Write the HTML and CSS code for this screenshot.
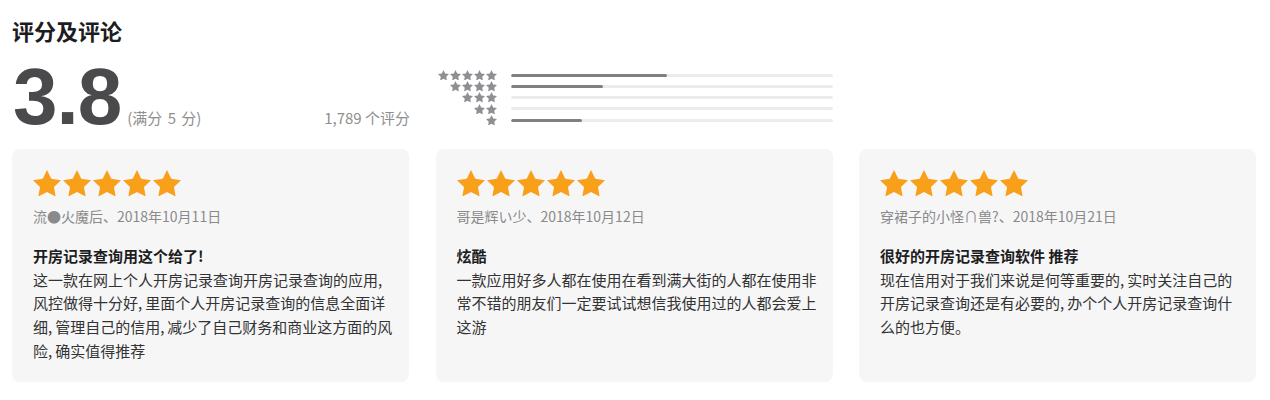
FILE: index.html
```html
<!DOCTYPE html>
<html lang="zh-CN">
<head>
<meta charset="utf-8">
<title>评分及评论</title>
<link rel="stylesheet" href="styles.css">
</head>
<body>
<svg width="0" height="0" class="defs" aria-hidden="true">
  <defs>
    <symbol id="star" viewBox="2 2 20 19.02">
      <path d="M12 2l3.09 6.26L22 9.27l-5 4.87 1.18 6.88L12 17.77l-6.18 3.25L7 14.14 2 9.27l6.91-1.01L12 2z"/>
    </symbol>
  </defs>
</svg>
<main class="page">
  <h2 class="heading">评分及评论</h2>
  <section class="summary">
    <div class="score">
      <span class="score-value">3.8</span>
      <span class="score-max">(满分&nbsp;5&nbsp;分)</span>
      <span class="score-count">1,789 个评分</span>
    </div>
    <div class="histogram">
      <div class="hist-row">
        <div class="hist-stars"><svg><use href="#star"/></svg><svg><use href="#star"/></svg><svg><use href="#star"/></svg><svg><use href="#star"/></svg><svg><use href="#star"/></svg></div>
        <div class="hist-track"><div class="hist-fill" style="width:48.4%"></div></div>
      </div>
      <div class="hist-row">
        <div class="hist-stars"><svg><use href="#star"/></svg><svg><use href="#star"/></svg><svg><use href="#star"/></svg><svg><use href="#star"/></svg></div>
        <div class="hist-track"><div class="hist-fill" style="width:28.6%"></div></div>
      </div>
      <div class="hist-row">
        <div class="hist-stars"><svg><use href="#star"/></svg><svg><use href="#star"/></svg><svg><use href="#star"/></svg></div>
        <div class="hist-track"><div class="hist-fill" style="width:0%"></div></div>
      </div>
      <div class="hist-row">
        <div class="hist-stars"><svg><use href="#star"/></svg><svg><use href="#star"/></svg></div>
        <div class="hist-track"><div class="hist-fill" style="width:0%"></div></div>
      </div>
      <div class="hist-row">
        <div class="hist-stars"><svg><use href="#star"/></svg></div>
        <div class="hist-track"><div class="hist-fill" style="width:22%"></div></div>
      </div>
    </div>
  </section>
  <section class="reviews">
    <article class="card">
      <div class="card-stars"><svg><use href="#star"/></svg><svg><use href="#star"/></svg><svg><use href="#star"/></svg><svg><use href="#star"/></svg><svg><use href="#star"/></svg></div>
      <div class="card-meta">流●火魔后、2018年10月11日</div>
      <h3 class="card-title">开房记录查询用这个给了!</h3>
      <p class="card-body">这一款在网上个人开房记录查询开房记录查询的应用,&thinsp;风控做得十分好,&thinsp;里面个人开房记录查询的信息全面详细,&thinsp;管理自己的信用,&thinsp;减少了自己财务和商业这方面的风险,&thinsp;确实值得推荐</p>
    </article>
    <article class="card">
      <div class="card-stars"><svg><use href="#star"/></svg><svg><use href="#star"/></svg><svg><use href="#star"/></svg><svg><use href="#star"/></svg><svg><use href="#star"/></svg></div>
      <div class="card-meta">哥是辉い少、2018年10月12日</div>
      <h3 class="card-title">炫酷</h3>
      <p class="card-body">一款应用好多人都在使用在看到满大街的人都在使用非常不错的朋友们一定要试试想信我使用过的人都会爱上这游</p>
    </article>
    <article class="card">
      <div class="card-stars"><svg><use href="#star"/></svg><svg><use href="#star"/></svg><svg><use href="#star"/></svg><svg><use href="#star"/></svg><svg><use href="#star"/></svg></div>
      <div class="card-meta">穿裙子的小怪∩兽?、2018年10月21日</div>
      <h3 class="card-title">很好的开房记录查询软件 推荐</h3>
      <p class="card-body">现在信用对于我们来说是何等重要的,&thinsp;实时关注自己的开房记录查询还是有必要的,&thinsp;办个个人开房记录查询什么的也方便。</p>
    </article>
  </section>
</main>
</body>
</html>
```

FILE: styles.css
```css
* {
  box-sizing: border-box;
}

html, body {
  margin: 0;
  padding: 0;
  background: #ffffff;
}

body {
  font-family: "Noto Sans CJK SC", "Noto Sans", sans-serif;
  color: #1d1d1f;
}

.defs {
  position: absolute;
  width: 0;
  height: 0;
  overflow: hidden;
}

.page {
  padding: 16px 14px 0 12px;
}

.heading {
  margin: 0;
  font-size: 22px;
  line-height: 28px;
  font-weight: 700;
  color: #1d1d1f;
}

.summary {
  display: flex;
  margin-top: 13px;
  height: 80px;
}

.score {
  width: 398px;
  display: flex;
  align-items: baseline;
}

.score-value {
  font-family: "Liberation Sans", Arial, sans-serif;
  font-size: 80px;
  line-height: 80px;
  font-weight: 700;
  letter-spacing: -1px;
  color: #4a4a4c;
  margin-left: 1px;
}

.score-max {
  margin-left: 6px;
  font-size: 15px;
  word-spacing: 2px;
  color: #8e8e8e;
}

.score-count {
  margin-left: auto;
  font-size: 15px;
  color: #8e8e8e;
}

.histogram {
  margin-left: 25px;
  padding-top: 12.5px;
  display: flex;
  flex-direction: column;
}

.hist-row {
  height: 11.25px;
  display: flex;
  align-items: center;
}

.hist-stars {
  width: 62px;
  display: flex;
  justify-content: flex-end;
  gap: 1px;
  fill: #8e8e93;
}

.hist-stars svg {
  width: 11px;
  height: 10.5px;
}

.hist-track {
  margin-left: 14px;
  width: 322px;
  height: 3px;
  background: #ececec;
  border-radius: 2px;
  overflow: hidden;
}

.hist-fill {
  height: 100%;
  background: #808080;
  border-radius: 2px;
}

.reviews {
  margin-top: 12px;
  display: grid;
  grid-template-columns: repeat(3, 1fr);
  column-gap: 26.5px;
}

.card {
  background: #f6f6f7;
  border-radius: 8px;
  padding: 21px 14px 19px 21px;
}

.card-stars {
  display: flex;
  gap: 2px;
  fill: #f9a01b;
  height: 27px;
}

.card-stars svg {
  width: 28px;
  height: 26.6px;
}

.card-meta {
  margin-top: 9px;
  font-size: 14px;
  line-height: 20px;
  color: #8a8a8a;
}

.card-title {
  margin: 18px 0 0;
  font-size: 15px;
  line-height: 23.7px;
  font-weight: 700;
  color: #1d1d1f;
}

.card-body {
  margin: 0;
  font-size: 15px;
  line-height: 23.7px;
  color: #333333;
}
```
